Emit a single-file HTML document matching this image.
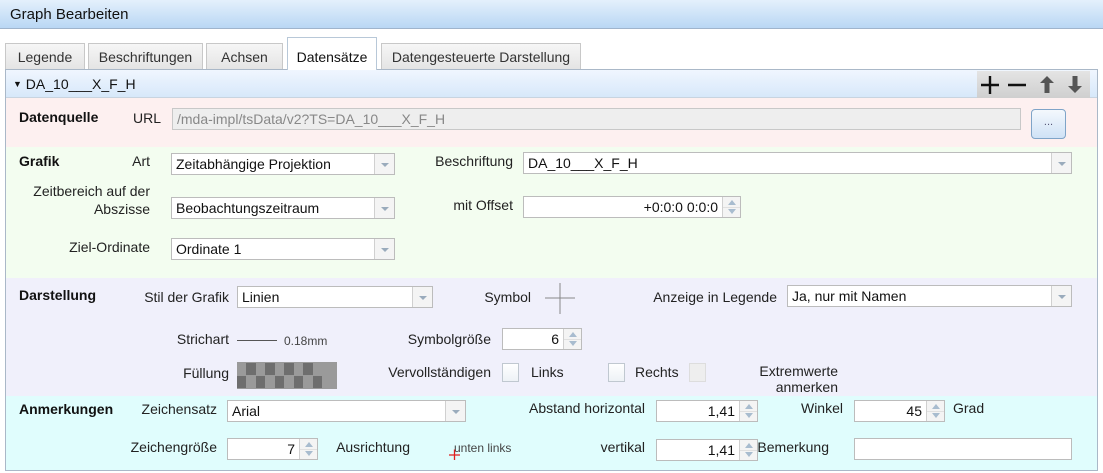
<!DOCTYPE html>
<html><head><meta charset="utf-8"><style>
*{box-sizing:border-box;margin:0;padding:0}
body{width:1103px;height:473px;background:#fff;font-family:"Liberation Sans",Arial,sans-serif;font-size:14px;color:#222;position:relative;overflow:hidden}
.a{position:absolute;white-space:nowrap}
.r{position:absolute;white-space:nowrap;text-align:right}
.b{font-weight:bold;color:#111}
.box{position:absolute;background:#fff;border:1px solid #bcbcbc;height:22px;line-height:20px;padding-left:4px;font-size:14px;color:#111}
.combo .arr{position:absolute;right:0;top:0;bottom:0;width:20px;border-left:1px solid #d0d0d0;background:#f4f4f4}
.combo .arr:after{content:"";position:absolute;left:6px;top:9px;border-left:4px solid transparent;border-right:4px solid transparent;border-top:4px solid #9aabbc}
.spin{text-align:right;padding-right:22px}
.spin .arr{position:absolute;right:0;top:0;bottom:0;width:18px;border-left:1px solid #d0d0d0;background:#f4f4f4}
.spin .arr:before{content:"";position:absolute;left:5px;top:3px;border-left:4px solid transparent;border-right:4px solid transparent;border-bottom:5px solid #a8bccf}
.spin .arr:after{content:"";position:absolute;left:5px;bottom:3px;border-left:4px solid transparent;border-right:4px solid transparent;border-top:5px solid #a8bccf}
.spin .arr i{position:absolute;left:0;right:0;top:10px;border-top:1px solid #e0e0e0}
.tab{position:absolute;top:43px;height:26px;border:1px solid #c8c8c8;border-bottom:none;background:linear-gradient(#f6f6f6,#e4e4e4);text-align:center;line-height:26px;font-size:14px;color:#333}
.cb{position:absolute;width:17px;height:19px;border:1px solid #c0c8d0;background:linear-gradient(#fff,#eef2f6)}
</style></head><body>
<div class="a" style="left:0;top:0;width:1103px;height:29px;background:linear-gradient(#e4f0fc,#b9d7f4);border-bottom:1px solid #9fb4cc"></div>
<div class="a" style="left:10px;top:6px;font-size:15px;color:#111">Graph Bearbeiten</div>

<div class="tab" style="left:5px;width:80px">Legende</div>
<div class="tab" style="left:88px;width:115px">Beschriftungen</div>
<div class="tab" style="left:206px;width:77px">Achsen</div>
<div class="tab" style="left:287px;top:37px;height:33px;line-height:38px;width:90px;background:#fff;color:#111;border-color:#b8c8d8;z-index:2">Datensätze</div>
<div class="tab" style="left:381px;width:200px">Datengesteuerte Darstellung</div>

<div class="a" style="left:5px;top:69px;width:1093px;height:402px;border:1px solid #aab8c8"></div>
<div class="a" style="left:6px;top:70px;width:1091px;height:28px;background:linear-gradient(#f0f6fe,#d7e8fa);border-bottom:1px solid #c8d4e0"></div>
<div class="a" style="left:13px;top:76px;font-size:14px;color:#111"><span style="font-size:9px;position:relative;top:-2px">▼</span> DA_10___X_F_H</div>
<div class="a" style="left:977px;top:71px;width:113px;height:27px;background:linear-gradient(#e4e4e4,#cfcfcf)"></div>
<svg class="a" style="left:977px;top:71px" width="113" height="27">
<path d="M4 14H22M13 5V23" stroke="#111" stroke-width="2.4"/>
<path d="M31 14H49" stroke="#111" stroke-width="2.4"/>
<path d="M70 5L63 12H67.5V22H72.5V12H77Z" fill="#555"/>
<path d="M98 22L91 15H95.5V5H100.5V15H105Z" fill="#555"/>
</svg>

<div class="a" style="left:6px;top:98px;width:1091px;height:49px;background:#fdf0f0"></div>
<div class="a b" style="left:19px;top:109px">Datenquelle</div>
<div class="a" style="left:133px;top:110px">URL</div>
<div class="box" style="left:172px;top:108px;width:849px;background:#eeeeee;color:#888;border-color:#c8c8c8">/mda-impl/tsData/v2?TS=DA_10___X_F_H</div>
<div class="a" style="left:1031px;top:109px;width:35px;height:30px;border:1px solid #7fa4c8;border-radius:4px;background:linear-gradient(#f4f8fd,#cfe2f6);text-align:center;line-height:24px;font-size:11px;color:#557">...</div>

<div class="a" style="left:6px;top:147px;width:1091px;height:131px;background:#f3fdf0"></div>
<div class="a b" style="left:19px;top:153px">Grafik</div>
<div class="r" style="right:953px;top:153px">Art</div>
<div class="box combo" style="left:171px;top:153px;width:224px">Zeitabhängige Projektion<span class="arr"></span></div>
<div class="r" style="right:590px;top:153px">Beschriftung</div>
<div class="box combo" style="left:523px;top:152px;width:549px">DA_10___X_F_H<span class="arr"></span></div>
<div class="r" style="right:953px;top:182px;line-height:18px">Zeitbereich auf der<br>Abszisse</div>
<div class="box combo" style="left:171px;top:197px;width:224px">Beobachtungszeitraum<span class="arr"></span></div>
<div class="r" style="right:590px;top:197px">mit Offset</div>
<div class="box spin" style="left:523px;top:196px;width:218px">+0:0:0 0:0:0<span class="arr"><i></i></span></div>
<div class="r" style="right:953px;top:239px">Ziel-Ordinate</div>
<div class="box combo" style="left:171px;top:238px;width:224px">Ordinate 1<span class="arr"></span></div>

<div class="a" style="left:6px;top:278px;width:1091px;height:118px;background:#f0f0fb"></div>
<div class="a b" style="left:19px;top:287px">Darstellung</div>
<div class="r" style="right:874px;top:289px">Stil der Grafik</div>
<div class="box combo" style="left:237px;top:286px;width:196px">Linien<span class="arr"></span></div>
<div class="r" style="right:572px;top:289px">Symbol</div>
<svg class="a" style="left:543px;top:282px" width="34" height="34"><path d="M2 16H32M17 1V32" stroke="#888" stroke-width="1"/></svg>
<div class="r" style="right:326px;top:289px">Anzeige in Legende</div>
<div class="box combo" style="left:787px;top:285px;width:285px">Ja, nur mit Namen<span class="arr"></span></div>

<div class="r" style="right:874px;top:331px">Strichart</div>
<div class="a" style="left:237px;top:340px;width:40px;border-top:1px solid #555"></div>
<div class="a" style="left:284px;top:334px;font-size:12px;color:#444">0.18mm</div>
<div class="r" style="right:612px;top:331px">Symbolgröße</div>
<div class="box spin" style="left:502px;top:328px;width:80px">6<span class="arr"><i></i></span></div>

<div class="r" style="right:874px;top:365px">Füllung</div>
<svg class="a" style="left:237px;top:362px" width="100" height="27">
<rect width="100" height="27" fill="#9a9a9a"/>
<g fill="#6e6e6e">
<rect x="9" y="1" width="10" height="12"/><rect x="28" y="1" width="10" height="12"/><rect x="47" y="1" width="10" height="12"/><rect x="66" y="1" width="10" height="12"/>
<rect x="0" y="14" width="9" height="12"/><rect x="19" y="14" width="9" height="12"/><rect x="38" y="14" width="9" height="12"/><rect x="57" y="14" width="9" height="12"/><rect x="76" y="14" width="9" height="12"/>
</g></svg>
<div class="r" style="right:612px;top:364px">Vervollständigen</div>
<div class="cb" style="left:502px;top:363px"></div>
<div class="a" style="left:531px;top:364px">Links</div>
<div class="cb" style="left:608px;top:363px"></div>
<div class="a" style="left:635px;top:364px">Rechts</div>
<div class="cb" style="left:689px;top:363px;background:#eee;border-color:#ddd"></div>
<div class="r" style="right:265px;top:363px;line-height:16px">Extremwerte<br>anmerken</div>

<div class="a" style="left:6px;top:396px;width:1091px;height:74px;background:#e0fdfd"></div>
<div class="a b" style="left:19px;top:401px">Anmerkungen</div>
<div class="r" style="right:886px;top:401px">Zeichensatz</div>
<div class="box combo" style="left:227px;top:400px;width:239px">Arial<span class="arr"></span></div>
<div class="r" style="right:458px;top:400px">Abstand horizontal</div>
<div class="box spin" style="left:656px;top:400px;width:102px">1,41<span class="arr"><i></i></span></div>
<div class="r" style="right:260px;top:400px">Winkel</div>
<div class="box spin" style="left:854px;top:400px;width:91px">45<span class="arr"><i></i></span></div>
<div class="a" style="left:953px;top:400px">Grad</div>

<div class="r" style="right:886px;top:439px">Zeichengröße</div>
<div class="box spin" style="left:227px;top:438px;width:91px">7<span class="arr"><i></i></span></div>
<div class="r" style="right:693px;top:439px">Ausrichtung</div>
<div class="a" style="left:454px;top:441px;font-size:12px;color:#444">unten links</div>
<svg class="a" style="left:449px;top:449px" width="12" height="12"><path d="M0 6H11M5.5 0.5V11" stroke="#e02020" stroke-width="1.3"/></svg>
<div class="r" style="right:458px;top:439px">vertikal</div>
<div class="box spin" style="left:656px;top:439px;width:102px">1,41<span class="arr"><i></i></span></div>
<div class="r" style="right:274px;top:439px">Bemerkung</div>
<div class="box" style="left:854px;top:438px;width:218px"></div>
</body></html>
